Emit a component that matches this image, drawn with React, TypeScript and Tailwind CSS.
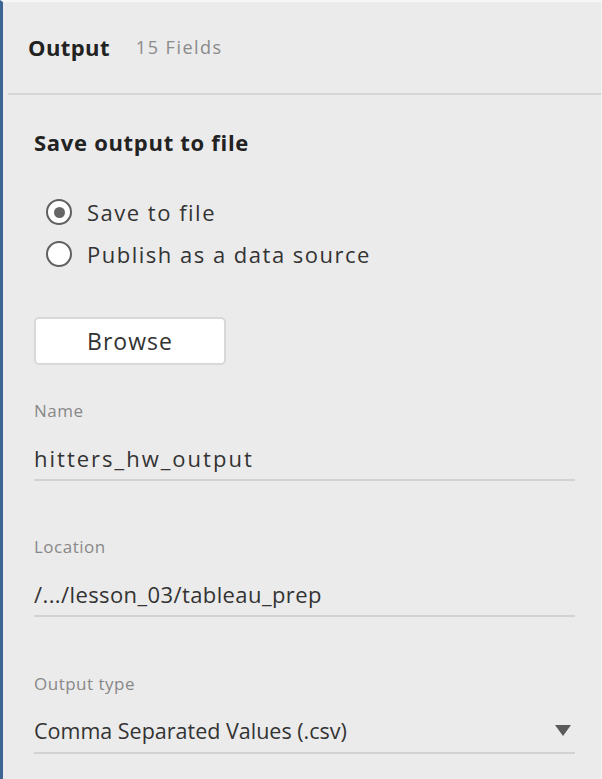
import React from "react";

const font = { fontFamily: '"Open Sans", "Noto Sans", sans-serif' };

function Radio({ checked, label }: { checked?: boolean; label: string }) {
  return (
    <div className="flex h-[42px] items-center">
      <div className="ml-[12px] flex h-[26px] w-[26px] items-center justify-center rounded-full border-2 border-[#606060] bg-white">
        {checked && <div className="h-[11px] w-[11px] rounded-full bg-[#666]" />}
      </div>
      <span className="ml-[15px] text-[22px] tracking-[1.5px] text-[#333]">{label}</span>
    </div>
  );
}

function Field({
  label,
  value,
  dropdown,
  top,
  valueClass,
}: {
  label: string;
  value: string;
  dropdown?: boolean;
  top: string;
  valueClass: string;
}) {
  return (
    <div className={top}>
      <div className="h-[24px] text-[17px] leading-[24px] tracking-[0.5px] text-[#888]">{label}</div>
      <div className="mt-[20px] flex h-[38px] items-start justify-between border-b-2 border-[#d2d2d2]">
        <span className={`leading-[30px] text-[#333] ${valueClass}`}>{value}</span>
        {dropdown && (
          <svg width="16" height="12" viewBox="0 0 16 12" className="mr-[4px] mt-[9px]">
            <path d="M0 0 H16 L8 11 Z" fill="#5a5a5a" />
          </svg>
        )}
      </div>
    </div>
  );
}

export default function App() {
  return (
    <div
      className="h-[779px] w-[602px] overflow-hidden border-l-[3px] border-t-2 border-r border-l-[#3d6592] border-t-[#f6f6f6] border-r-[#f4f4f4] bg-[#ebebeb]"
      style={font}
    >
      {/* Header */}
      <div className="flex h-[91px] items-center pl-[25px]">
        <span className="text-[22px] font-bold tracking-[0.4px] text-[#222]">Output</span>
        <span className="ml-[26px] text-[18px] tracking-[1.5px] text-[#8a8a8a]">15 Fields</span>
      </div>
      <div className="ml-[5px] h-[2px] bg-[#d5d5d5]" />

      <div className="pl-[31px] pr-[26px]">
        <div className="mt-[33px] text-[22px] font-bold leading-[28px] tracking-[0.7px] text-[#222]">
          Save output to file
        </div>

        <div className="mt-[35px]">
          <Radio checked label="Save to file" />
          <Radio label="Publish as a data source" />
        </div>

        <button className="mt-[42px] flex h-[48px] w-[192px] items-center justify-center rounded-[5px] border-2 border-[#d8d8d8] bg-white text-[23px] tracking-[1px] text-[#333]">
          Browse
        </button>

        <Field
          top="mt-[34px]"
          label="Name"
          value="hitters_hw_output"
          valueClass="text-[22px] tracking-[2px]"
        />
        <Field
          top="mt-[54px]"
          label="Location"
          value="/.../lesson_03/tableau_prep"
          valueClass="text-[22px] tracking-[0.4px]"
        />
        <Field
          top="mt-[55px]"
          label="Output type"
          value="Comma Separated Values (.csv)"
          valueClass="text-[21.5px]"
          dropdown
        />
      </div>
    </div>
  );
}
